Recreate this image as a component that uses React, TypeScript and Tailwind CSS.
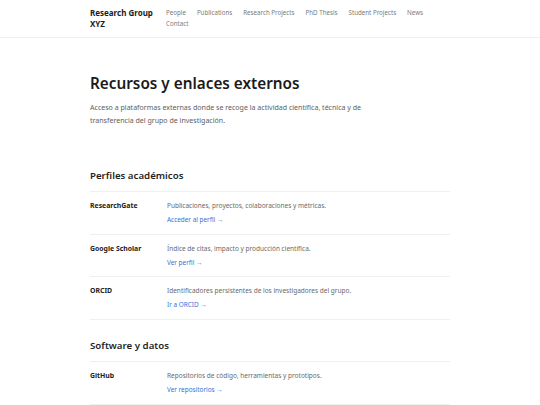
const nav = ["People", "Publications", "Research Projects", "PhD Thesis", "Student Projects", "News", "Contact"];

const sections = [
  {
    title: "Perfiles académicos",
    items: [
      { name: "ResearchGate", desc: "Publicaciones, proyectos, colaboraciones y métricas.", link: "Acceder al perfil" },
      { name: "Google Scholar", desc: "Índice de citas, impacto y producción científica.", link: "Ver perfil" },
      { name: "ORCID", desc: "Identificadores persistentes de los investigadores del grupo.", link: "Ir a ORCID" },
    ],
  },
  {
    title: "Software y datos",
    items: [
      { name: "GitHub", desc: "Repositorios de código, herramientas y prototipos.", link: "Ver repositorios" },
    ],
  },
];

export default function App() {
  return (
    <div className="min-h-screen bg-white text-[#1c1c1c]" style={{ fontFamily: '"Noto Sans", sans-serif' }}>
      <header className="border-b border-[#efefef]">
        <div className="mx-auto flex w-[360px] pt-[7px] pb-[8px]">
          <div className="w-[76px] text-[8px] font-bold leading-[11px]">Research Group XYZ</div>
          <nav className="flex w-[270px] flex-wrap gap-x-[11px] text-[6.2px] leading-[11px] text-[#7a7a7a]">
            {nav.map((n) => (
              <a key={n} href="#">{n}</a>
            ))}
          </nav>
        </div>
      </header>

      <main className="mx-auto w-[360px] pt-[34px]">
        <h1 className="text-[15.3px] font-semibold leading-[22px] text-[#1a1a1a]">Recursos y enlaces externos</h1>
        <p className="mt-[7px] w-[290px] text-[7.05px] leading-[13px] text-[#5e5e5e]">
          Acceso a plataformas externas donde se recoge la actividad científica, técnica y de transferencia del grupo de investigación.
        </p>

        {sections.map((s, si) => (
          <section key={s.title} className={si === 0 ? "mt-[42px]" : "mt-[19.5px]"}>
            <h2 className="pb-[8px] text-[9.7px] font-semibold leading-[14px] text-[#1f1f1f]">{s.title}</h2>
            <div className="border-t border-[#efefef]">
              {s.items.map((it) => (
                <div key={it.name} className="flex border-b border-[#efefef] pt-[9px] pb-[8.5px]">
                  <div className="w-[77px] text-[6.9px] font-bold leading-[10px] text-[#222]">{it.name}</div>
                  <div>
                    <div className="text-[6.5px] leading-[10px] text-[#6a6a6a]">{it.desc}</div>
                    <a href="#" className="mt-[4px] block text-[6.4px] leading-[10px] text-[#3570d8]">
                      {it.link} →
                    </a>
                  </div>
                </div>
              ))}
            </div>
          </section>
        ))}
      </main>
    </div>
  );
}
